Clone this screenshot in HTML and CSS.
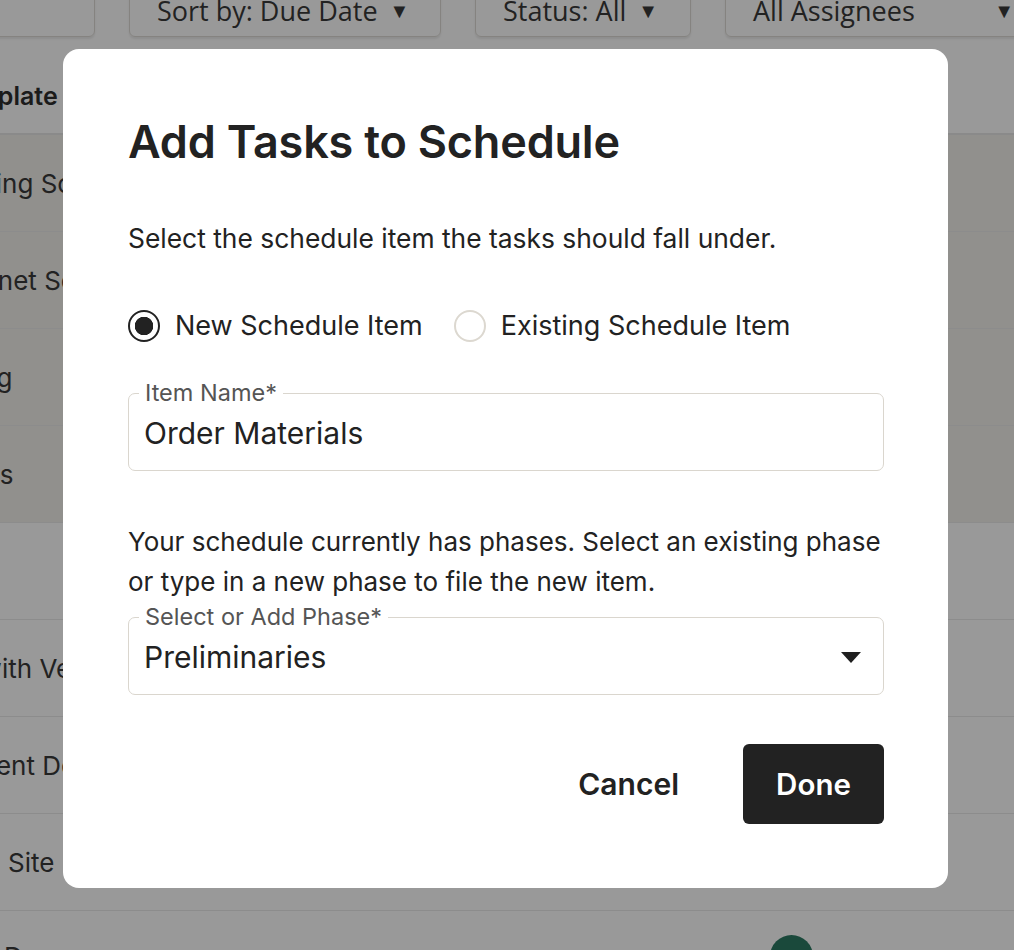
FILE: index.html
```html
<!DOCTYPE html>
<html lang="en">
<head>
<meta charset="utf-8">
<title>Add Tasks to Schedule</title>
<link rel="stylesheet" href="styles.css">
</head>
<body>
<div class="page">
  <div class="filters">
    <div class="filter f1"></div>
    <div class="filter f2">Sort by: Due Date <span class="caret">▼</span></div>
    <div class="filter f3">Status: All <span class="caret">▼</span></div>
    <div class="filter f4"><span>All Assignees</span><span class="caret">▼</span></div>
  </div>
  <div class="table">
    <div class="thead"><span class="th">Template</span></div>
    <div class="row beige"><span class="cell">Framing Schedule</span></div>
    <div class="row beige"><span class="cell c2">Cabinet Selection</span></div>
    <div class="row beige"><span class="cell c3">Siding</span></div>
    <div class="row beige"><span class="cell c4">Doors</span></div>
    <div class="row"><span class="cell"></span></div>
    <div class="row"><span class="cell c6">Meet with Vendor</span></div>
    <div class="row"><span class="cell c7">Equipment Delivery</span></div>
    <div class="row"><span class="cell c8">Clean Site</span></div>
    <div class="row"><span class="cell c9">Demo</span><span class="avatar"></span></div>
  </div>
</div>

<div class="overlay">
  <div class="modal" role="dialog" aria-labelledby="dlg-title">
    <h1 id="dlg-title" class="title">Add Tasks to Schedule</h1>
    <p class="lead">Select the schedule item the tasks should fall under.</p>

    <div class="radios">
      <label class="radio">
        <span class="dot checked"></span>
        <span>New Schedule Item</span>
      </label>
      <label class="radio">
        <span class="dot"></span>
        <span>Existing Schedule Item</span>
      </label>
    </div>

    <div class="field">
      <span class="legend">Item Name*</span>
      <span class="value">Order Materials</span>
    </div>

    <p class="note">Your schedule currently has phases. Select an existing phase or type in a new phase to file the new item.</p>

    <div class="field select">
      <span class="legend">Select or Add Phase*</span>
      <span class="value">Preliminaries</span>
      <svg class="arrow" width="20" height="11" viewBox="0 0 20 11" aria-hidden="true"><path d="M0 0 H20 L10 11 Z" fill="#1f1f1f"/></svg>
    </div>

    <div class="actions">
      <button class="btn cancel">Cancel</button>
      <button class="btn done">Done</button>
    </div>
  </div>
</div>
</body>
</html>
```

FILE: styles.css
```css
* { box-sizing: border-box; }
html, body { margin: 0; height: 100%; }
body {
  background: #fff;
  font-family: Inter, "Noto Sans", "Liberation Sans", sans-serif;
  color: #222;
  overflow: hidden;
}

/* ---------- background page ---------- */
.page { width: 1014px; height: 950px; overflow: hidden; }
.filters {
  display: flex;
  gap: 34px;
  margin-top: -23px;
  height: 60px;
}
.filter {
  height: 60px;
  border: 1.5px solid #dedbd6;
  border-radius: 6px;
  box-shadow: 0 2px 2px rgba(0,0,0,0.08);
  font-family: "Open Sans", "Liberation Sans", sans-serif;
  font-size: 27px;
  color: #3a3a3a;
  display: flex;
  align-items: center;
  padding: 6px 0 0 27px;
  white-space: nowrap;
  flex: none;
}
.caret { font-size: 20px; margin-left: 12px; }
.f1 { width: 150px; margin-left: -55px; }
.f2 { width: 312px; }
.f3 { width: 216px; }
.f4 { width: 330px; justify-content: space-between; padding-right: 40px; }
.f4 .caret { margin-left: 0; }

.table { margin-top: 0; }
.thead {
  height: 98px;
  border-bottom: 2px solid #e6e6e6;
  display: flex;
  align-items: center;
  padding-top: 22px;
  overflow: hidden;
}
.th {
  font-weight: 600;
  font-size: 25px;
  color: #2e2e2e;
  margin-left: -54px;
}
.row {
  height: 97px;
  border-bottom: 1px solid #eaeaea;
  display: flex;
  align-items: center;
  position: relative;
  overflow: hidden;
  font-size: 26px;
  color: #3a3a3a;
}
.row.beige { background: #f2f0ec; }
.cell { margin-left: -66px; white-space: nowrap; }
.c2 { margin-left: -58px; }
.c3 { margin-left: -64px; }
.c4 { margin-left: -60px; }
.c6 { margin-left: -89px; }
.c7 { margin-left: -96px; }
.c8 { margin-left: -70px; }
.c9 { margin-left: 4px; align-self: flex-start; margin-top: 30px; }
.avatar {
  position: absolute;
  left: 770px;
  top: 24px;
  width: 43px;
  height: 43px;
  border-radius: 50%;
  background: #2c7a63;
}

/* ---------- overlay + modal ---------- */
.overlay {
  position: fixed;
  inset: 0;
  background: rgba(0,0,0,0.4);
  padding: 49px 0 0 63px;
}
.modal {
  width: 885px;
  height: 839px;
  background: #fff;
  border-radius: 16px;
  padding: 63px 64px 64px 65px;
  display: flex;
  flex-direction: column;
}
.title {
  margin: 0;
  font-size: 45px;
  font-weight: 600;
  line-height: 60px;
  color: #222;
  letter-spacing: -0.2px;
}
.lead {
  margin: 50px 0 0;
  font-size: 26.4px;
  line-height: 32px;
  color: #222;
}
.radios {
  display: flex;
  gap: 31px;
  margin-top: 56px;
}
.radio {
  display: flex;
  align-items: center;
  gap: 15px;
  font-size: 27px;
  line-height: 32px;
  color: #222;
}
.dot {
  width: 32px;
  height: 32px;
  border-radius: 50%;
  border: 2px solid #dcd8d0;
  flex: none;
}
.dot.checked {
  border: 2px solid #222;
  background: radial-gradient(circle, #222 0 9px, #fff 9.5px);
}

.field {
  position: relative;
  margin-top: 51px;
  height: 78px;
  flex: none;
  border: 1.5px solid #dad6ce;
  border-radius: 7px;
  display: flex;
  align-items: center;
  padding: 2px 15px 0;
}
.legend {
  position: absolute;
  top: -15px;
  left: 10px;
  padding: 0 6px;
  background: #fff;
  font-size: 23.5px;
  line-height: 28px;
  color: #555;
}
.value {
  font-size: 30px;
  color: #222;
}
.select { margin-top: 15px; }
.arrow { position: absolute; right: 22px; top: 34px; }

.note {
  margin: 51px 0 0;
  font-size: 26px;
  line-height: 40px;
  color: #222;
}

.actions {
  margin-top: auto;
  display: flex;
  justify-content: flex-end;
  align-items: center;
  gap: 28px;
}
.btn {
  font-family: inherit;
  font-size: 30px;
  font-weight: 600;
  border: none;
  border-radius: 6px;
  height: 80px;
  cursor: pointer;
}
.cancel { background: none; color: #222; padding: 0 36px; }
.done { background: #222; color: #fff; width: 141px; font-size: 29.5px; }
```
